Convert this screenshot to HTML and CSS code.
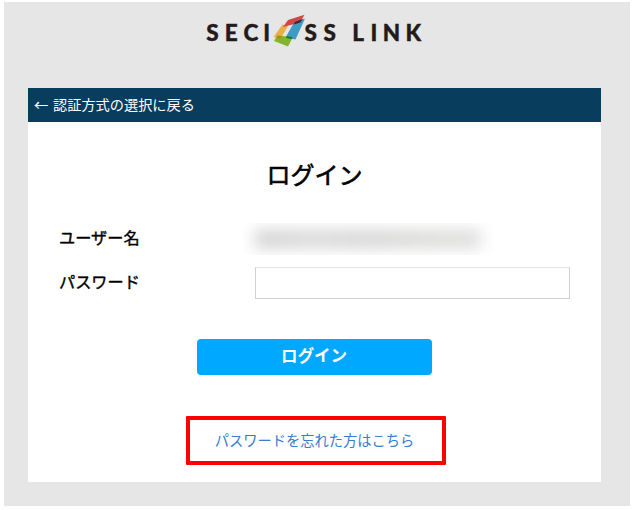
FILE: index.html
```
<!DOCTYPE html>
<html lang="ja">
<head>
<meta charset="utf-8">
<title>ログイン</title>
<link rel="stylesheet" href="styles.css">
</head>
<body>
<main class="page">
  <header class="brand">
    <svg class="logo" width="240" height="50" viewBox="0 0 240 50" role="img" aria-label="SECIOSS LINK">
      <g class="wordmark">
        <text y="34.7" x="10.3 28.7 47.6 67.3">SECI</text>
        <text y="34.7" x="108.6 127.4">SS</text>
        <text y="34.7" x="156.2 174.6 186.7 209.6">LINK</text>
      </g>
      <g class="mark">
        <path fill="#e8b04b" d="M86.5 18.5 92 20 84.5 33 77.5 31Z"/>
        <path fill="#3d9bc4" d="M97.5 17.5 109 12.5 99.5 33.5 89.5 31.5Z"/>
        <path fill="#cf4844" d="M92 14 108.5 8.8 104 16.5 87 21Z"/>
        <path fill="#83b52b" d="M81.5 29.5 97 31 92 40.5 78 35Z"/>
        <path fill="#342a35" d="M99 16 107.3 12.8 104 16.5 97.8 18.5Z"/>
        <path fill="#167044" d="M90.5 30.3 96.7 31 95.7 33 90.3 32Z"/>
        <path fill="#b2842a" d="M81.5 29.7 85.5 30 84 32.8 80.5 32Z"/>
      </g>
    </svg>
  </header>
  <section class="card">
    <nav class="back"><a href="#"><span class="arrow">←</span>認証方式の選択に戻る</a></nav>
    <h1>ログイン</h1>
    <form>
      <div class="row">
        <span class="label">ユーザー名</span>
        <div class="masked"><span class="smear"></span></div>
      </div>
      <div class="row password">
        <label class="label" for="password">パスワード</label>
        <input id="password" type="password">
      </div>
      <button type="button">ログイン</button>
    </form>
    <div class="highlight"><a href="#">パスワードを忘れた方はこちら</a></div>
  </section>
</main>
</body>
</html>
```
FILE: styles.css
```
* { box-sizing: border-box; }
body {
  margin: 0;
  background: #fff;
  color: #000;
  font-family: "Noto Sans CJK JP", sans-serif;
}
a { text-decoration: none; }
.page {
  width: 626px;
  height: 504px;
  margin: 2px 0 0 4px;
  padding: 4px 29px 0 24px;
  background: #e6e6e6;
}
.brand { height: 82px; padding-left: 168px; }
.logo { display: block; }
.wordmark {
  font: 900 22.5px Lato, sans-serif;
  fill: #251a19;
  stroke: #251a19;
  stroke-width: 0.4px;
}
.card {
  display: flex;
  flex-direction: column;
  width: 573px;
  height: 394px;
  background: #fff;
}
.back {
  height: 33.5px;
  padding-left: 6px;
  background: #083d5e;
  font-size: 14.2px;
  line-height: 32px;
}
.back a { display: flex; color: #fff; }
.arrow { width: 19px; -webkit-text-stroke: 0.2px #fff; }
h1 {
  margin: 34px 0 0;
  font-size: 24px;
  font-weight: 400;
  line-height: 36px;
  text-align: center;
  -webkit-text-stroke: 0.6px #000;
}
form { display: flex; flex-direction: column; }
.row {
  display: flex;
  align-items: center;
  height: 32px;
  margin-top: 31px;
  padding-left: 31px;
}
.row.password { margin-top: 12px; }
.label {
  width: 196px;
  padding-bottom: 3px;
  font-size: 16.2px;
  font-weight: 400;
  line-height: 24px;
  -webkit-text-stroke: 0.4px #000;
}
.masked {
  display: flex;
  align-items: center;
  width: 250px;
  height: 32px;
  margin-left: -12px;
  padding: 1px 12px 0;
  overflow: hidden;
}
.smear {
  width: 100%;
  height: 18px;
  background: linear-gradient(90deg, #d0d0d0, #d8d8d8 25%, #d4d4d4 50%, #dadad8 75%, #dcdcdc);
  filter: blur(8px);
}
input {
  width: 315px;
  height: 32px;
  border: 1px solid #d0d0d0;
  border-top-color: #e2e2e2;
  background: #fff;
}
button {
  align-self: center;
  width: 235px;
  height: 35.5px;
  margin-top: 40.5px;
  margin-right: 1px;
  padding: 0 0 3px;
  border: 0;
  border-radius: 4px;
  background: #00a8ff;
  color: #fff;
  font: 700 16.5px "Noto Sans CJK JP", sans-serif;
}
.highlight {
  align-self: center;
  width: 260px;
  height: 49px;
  margin: 41.5px 0 0 3px;
  padding-right: 3px;
  border: 4px solid #f00;
  border-radius: 1px;
  font-size: 14.25px;
  line-height: 40px;
  text-align: center;
}
.highlight a { color: #397bd0; }
```
